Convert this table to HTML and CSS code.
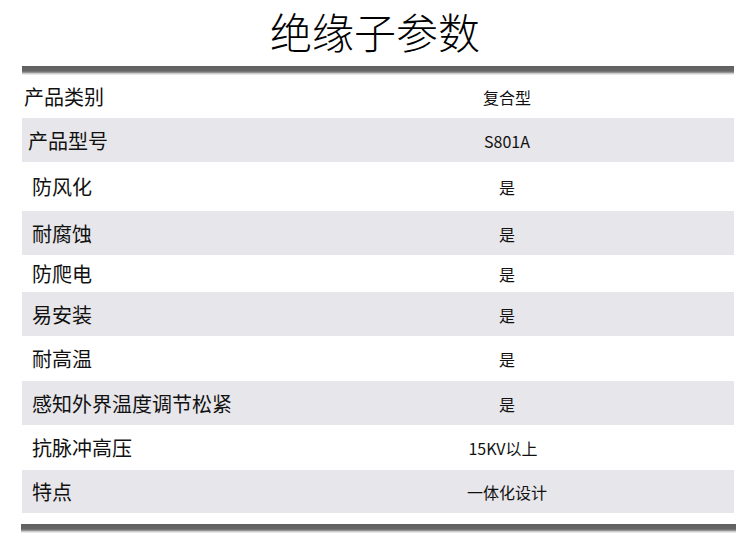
FILE: index.html
```html
<!DOCTYPE html>
<html lang="zh">
<head>
<meta charset="utf-8">
<title>绝缘子参数</title>
<link rel="stylesheet" href="styles.css">
</head>
<body>
<div class="page">
  <h1 class="title">绝缘子参数</h1>
  <div class="rule rule--top"></div>
  <div class="table">
    <div class="row h43 pad-a"><div class="name">产品类别</div><div class="value">复合型</div></div>
    <div class="row alt h44 pad-b"><div class="name">产品型号</div><div class="value">S801A</div></div>
    <div class="row h49"><div class="name">防风化</div><div class="value">是</div></div>
    <div class="row alt h44"><div class="name">耐腐蚀</div><div class="value">是</div></div>
    <div class="row h37"><div class="name">防爬电</div><div class="value">是</div></div>
    <div class="row alt h44"><div class="name">易安装</div><div class="value">是</div></div>
    <div class="row h45"><div class="name">耐高温</div><div class="value">是</div></div>
    <div class="row alt h44"><div class="name">感知外界温度调节松紧</div><div class="value">是</div></div>
    <div class="row h45"><div class="name">抗脉冲高压</div><div class="value value--shift">15KV以上</div></div>
    <div class="row alt h43"><div class="name">特点</div><div class="value">一体化设计</div></div>
  </div>
  <div class="rule rule--bottom"></div>
</div>
</body>
</html>
```

FILE: styles.css
```css
html, body {
  margin: 0;
  padding: 0;
  background: #ffffff;
}

body {
  font-family: "Noto Sans CJK SC", "Noto Sans", sans-serif;
  color: #111111;
}

.page {
  width: 750px;
  height: 546px;
  overflow: hidden;
}

.title {
  margin: 0;
  height: 66px;
  font-size: 42px;
  font-weight: 300;
  line-height: 62px;
  text-align: center;
  color: #000000;
}

.rule {
  height: 9px;
  background: linear-gradient(#606060 0%, #666666 55%, #8a8a8a 70%, #d4d4d4 85%, #f4f4f4 100%);
}

.rule--top {
  margin: 0 16px 0 22px;
}

.rule--bottom {
  margin: 11px 14px 0 21px;
}

.table {
  margin: 0 16px 0 22px;
  display: flex;
  flex-direction: column;
}

.row {
  display: grid;
  grid-template-columns: 258px 1fr;
  align-items: center;
  padding-left: 10px;
}

.row.alt {
  background: #e7e6ea;
}

.h37 { height: 37px; }
.h43 { height: 43px; }
.h44 { height: 44px; }
.h45 { height: 45px; }
.h49 { height: 49px; }

.pad-a { padding-left: 2px; }
.pad-b { padding-left: 6px; }

.name {
  font-size: 20px;
  line-height: 24px;
  white-space: nowrap;
  padding-top: 1px;
}

.pad-a .value { margin-left: 8px; }
.pad-b .value { margin-left: 4px; }

.value {
  font-size: 16px;
  line-height: 20px;
  text-align: center;
  padding-top: 1px;
  padding-right: 10px;
}

.value--shift {
  padding-right: 18px;
}
```
